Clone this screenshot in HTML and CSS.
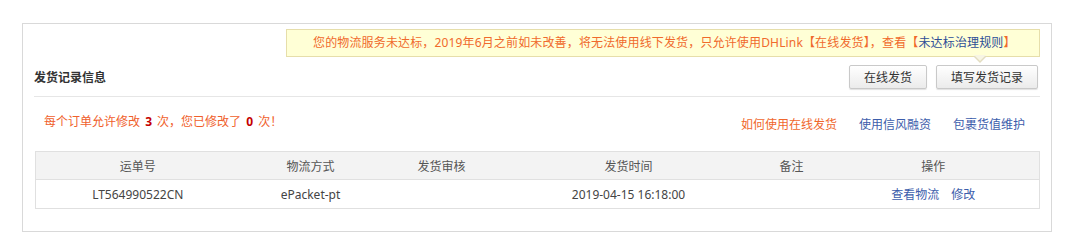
FILE: index.html
```html
<!DOCTYPE html>
<html lang="zh-CN">
<head>
<meta charset="utf-8">
<title>发货记录信息</title>
<link rel="stylesheet" href="styles.css">
</head>
<body>
<div class="panel">
  <div class="notice-row">
    <div class="notice">您的物流服务未达标，2019年6月之前如未改善，将无法使用线下发货，只允许使用DHLink<span class="br">【</span>在线发货<span class="br">】</span>，查看<span class="br">【</span><a class="rule">未达标治理规则</a><span class="br">】</span></div>
  </div>
  <div class="head">
    <div class="title">发货记录信息</div>
    <div class="btns">
      <button class="btn">在线发货</button>
      <button class="btn">填写发货记录</button>
    </div>
  </div>
  <div class="info">
    <div class="warn">每个订单允许修改 <b>3</b> 次，您已修改了 <b>0</b> 次！</div>
    <div class="links">
      <a class="link orange">如何使用在线发货</a>
      <a class="link">使用信风融资</a>
      <a class="link">包裹货值维护</a>
    </div>
  </div>
  <table class="grid">
    <colgroup>
      <col class="c1"><col class="c2"><col class="c3"><col class="c4"><col class="c5"><col class="c6">
    </colgroup>
    <thead>
      <tr><th>运单号</th><th>物流方式</th><th>发货审核</th><th>发货时间</th><th>备注</th><th>操作</th></tr>
    </thead>
    <tbody>
      <tr>
        <td>LT564990522CN</td>
        <td>ePacket-pt</td>
        <td></td>
        <td>2019-04-15 16:18:00</td>
        <td></td>
        <td><a class="link op">查看物流</a><a class="link op">修改</a></td>
      </tr>
    </tbody>
  </table>
</div>
</body>
</html>
```

FILE: styles.css
```css
* { box-sizing: border-box; }
body {
  margin: 0;
  background: #fff;
  font-family: "Noto Sans", "Noto Sans CJK SC", sans-serif;
  font-size: 12px;
  color: #333;
}
.panel {
  margin: 23px 0 0 22px;
  width: 1030px;
  border: 1px solid #d9d9d9;
  padding: 5px 11px 22px 11px;
}
.notice-row {
  display: flex;
  justify-content: flex-end;
}
.notice {
  position: relative;
  width: 754px;
  height: 28px;
  line-height: 26px;
  border: 1px solid #e6deaa;
  background: #ffffd6;
  color: #f06a2c;
  padding-left: 26px;
  white-space: nowrap;
  letter-spacing: 0.15px;
}
.notice::before,
.notice::after {
  content: "";
  position: absolute;
  border-left: 7px solid transparent;
  border-right: 7px solid transparent;
}
.notice::before {
  right: 52px;
  bottom: -7px;
  border-top: 7px solid #e2dcc0;
}
.notice::after {
  right: 53px;
  bottom: -5px;
  border-left-width: 6px;
  border-right-width: 6px;
  border-top: 6px solid #f7f5e4;
}
.notice .br { color: #f06a2c; }
.notice .rule { color: #2d4d96; }
.head {
  display: flex;
  align-items: center;
  justify-content: space-between;
  margin-top: 8px;
  padding-bottom: 7px;
  border-bottom: 1px solid #e6e6e6;
}
.title {
  font-weight: bold;
  color: #333;
}
.btns {
  display: flex;
  gap: 9px;
  padding-right: 2px;
}
.btn {
  height: 24px;
  padding: 0 14px;
  border: 1px solid #c9c9c9;
  border-radius: 2px;
  background: linear-gradient(#ffffff, #ebebeb);
  box-shadow: 0 1px 1px rgba(0,0,0,0.12);
  font: inherit;
  color: #333;
}
.info {
  display: flex;
  justify-content: space-between;
  align-items: flex-start;
  margin-top: 16px;
  padding: 0 15px 0 10px;
}
.warn {
  line-height: 18px;
  color: #f0602b;
  word-spacing: 2px;
}
.warn b { color: #c40000; }
.links {
  display: flex;
  gap: 22px;
  padding-top: 3px;
  line-height: 18px;
}
.link {
  color: #3c5dab;
  cursor: pointer;
}
.link.orange { color: #f0672d; }
.grid {
  margin: 17px 0 0 1px;
  width: 1004px;
  border-collapse: collapse;
  table-layout: fixed;
  border: 1px solid #e0e0e0;
}
.c1 { width: 204px; }
.c2 { width: 142px; }
.c3 { width: 120px; }
.c4 { width: 254px; }
.c5 { width: 72px; }
.c6 { width: 212px; }
.grid th {
  height: 28px;
  background: #f3f3f3;
  font-weight: normal;
  color: #555;
  border-bottom: 1px solid #e0e0e0;
  padding: 0;
}
.grid td {
  height: 29px;
  text-align: center;
  color: #444;
  padding: 0;
}
.op { margin: 0 6px; }
```
